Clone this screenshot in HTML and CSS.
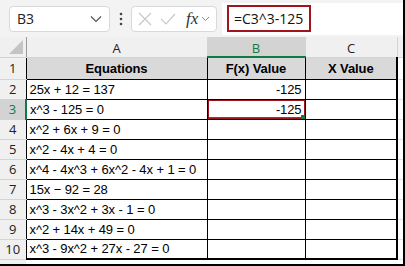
FILE: index.html
```
<!DOCTYPE html>
<html lang="en">
<head>
    <meta charset="UTF-8">
    <title>Equations</title>
    <link rel="stylesheet" href="styles.css">
</head>
<body>
    <div class="sheet">
        <div class="toolbar">
            <div class="name-box">
                <span>B3</span>
                <svg width="12" height="8" viewBox="0 0 12 8"><path d="M1 1.5 L6 6.5 L11 1.5" fill="none" stroke="#555" stroke-width="1.2"/></svg>
            </div>
            <div class="dots">
                <svg width="4" height="14" viewBox="0 0 4 14"><circle cx="2" cy="2" r="1.3" fill="#444"/><circle cx="2" cy="7" r="1.3" fill="#444"/><circle cx="2" cy="12" r="1.3" fill="#444"/></svg>
            </div>
            <div class="fx-group">
                <svg width="14" height="14" viewBox="0 0 14 14"><path d="M1 1 L13 13 M13 1 L1 13" stroke="#c8c8c8" stroke-width="1.2"/></svg>
                <svg width="16" height="14" viewBox="0 0 16 14"><path d="M1 7 L6 12 L15 2" fill="none" stroke="#c8c8c8" stroke-width="1.2"/></svg>
                <span class="fx">fx</span>
                <svg width="9" height="6" viewBox="0 0 9 6"><path d="M1 1 L4.5 4.5 L8 1" fill="none" stroke="#888" stroke-width="1"/></svg>
            </div>
            <div class="formula">
                <span class="formula-text">=C3^3-125</span>
            </div>
        </div>

        <table class="grid">
            <colgroup>
                <col class="col-num">
                <col class="col-a">
                <col class="col-b">
                <col class="col-c">
                <col class="col-rest">
            </colgroup>
            <tr class="head-row">
                <th class="corner"><span class="corner-mark"></span></th>
                <th class="col-head">A</th>
                <th class="col-head active">B</th>
                <th class="col-head">C</th>
                <th class="col-head rest"></th>
            </tr>
            <tr class="title-row">
                <td class="row-num">1</td>
                <td class="cell title">Equations</td>
                <td class="cell title">F(x) Value</td>
                <td class="cell title last">X Value</td>
                <td class="rest"></td>
            </tr>
            <tr>
                <td class="row-num">2</td>
                <td class="cell">25x + 12 = 137</td>
                <td class="cell num">-125</td>
                <td class="cell last"></td>
                <td class="rest"></td>
            </tr>
            <tr>
                <td class="row-num active">3</td>
                <td class="cell">x^3 - 125 = 0</td>
                <td class="cell num selected">-125<span class="fill-handle"></span></td>
                <td class="cell last"></td>
                <td class="rest"></td>
            </tr>
            <tr>
                <td class="row-num">4</td>
                <td class="cell">x^2 + 6x + 9 = 0</td>
                <td class="cell"></td>
                <td class="cell last"></td>
                <td class="rest"></td>
            </tr>
            <tr>
                <td class="row-num">5</td>
                <td class="cell">x^2 - 4x + 4 = 0</td>
                <td class="cell"></td>
                <td class="cell last"></td>
                <td class="rest"></td>
            </tr>
            <tr>
                <td class="row-num">6</td>
                <td class="cell">x^4 - 4x^3 + 6x^2 - 4x + 1 = 0</td>
                <td class="cell"></td>
                <td class="cell last"></td>
                <td class="rest"></td>
            </tr>
            <tr>
                <td class="row-num">7</td>
                <td class="cell">15x − 92 = 28</td>
                <td class="cell"></td>
                <td class="cell last"></td>
                <td class="rest"></td>
            </tr>
            <tr>
                <td class="row-num">8</td>
                <td class="cell">x^3 - 3x^2 + 3x - 1 = 0</td>
                <td class="cell"></td>
                <td class="cell last"></td>
                <td class="rest"></td>
            </tr>
            <tr>
                <td class="row-num">9</td>
                <td class="cell">x^2 + 14x + 49 = 0</td>
                <td class="cell"></td>
                <td class="cell last"></td>
                <td class="rest"></td>
            </tr>
            <tr class="bottom-row">
                <td class="row-num">10</td>
                <td class="cell">x^3 - 9x^2 + 27x - 27 = 0</td>
                <td class="cell"></td>
                <td class="cell last"></td>
                <td class="rest"></td>
            </tr>
            <tr class="spare-row">
                <td class="row-num"></td>
                <td></td>
                <td></td>
                <td></td>
                <td class="rest"></td>
            </tr>
        </table>
    </div>
</body>
</html>
```
FILE: styles.css
```
body {
    margin: 0;
    font-family: "Liberation Sans", Arial, sans-serif;
    background-color: #fff;
}

.sheet {
    width: 403px;
    height: 264px;
    border-right: 2px solid #000;
    border-bottom: 2px solid #000;
    overflow: hidden;
    background-color: #fff;
}

/* formula bar strip */
.toolbar {
    display: flex;
    align-items: center;
    height: 37px;
    padding-left: 9px;
    background-color: #f3f3f3;
    box-sizing: border-box;
}

.name-box {
    width: 101px;
    height: 26px;
    box-sizing: border-box;
    display: flex;
    align-items: center;
    justify-content: space-between;
    padding: 0 7px 0 7px;
    background-color: #fff;
    border: 1px solid #d9d9d9;
    border-radius: 4px;
    font-family: "Open Sans", sans-serif;
    font-size: 14px;
    color: #222;
}

.dots {
    width: 21px;
    display: flex;
    justify-content: center;
}

.fx-group {
    width: 86px;
    height: 26px;
    box-sizing: border-box;
    display: flex;
    align-items: center;
    gap: 8px;
    padding-left: 6px;
    background-color: #fff;
    border: 1px solid #d9d9d9;
    border-radius: 4px;
}

.fx {
    font-family: "Liberation Serif", serif;
    font-style: italic;
    font-size: 17px;
    color: #333;
    margin-left: 2px;
    margin-right: -5px;
}

.formula {
    flex: 1;
    height: 32px;
    margin-left: 5px;
    display: flex;
    align-items: center;
    padding-left: 5px;
    background-color: #fff;
}

.formula-text {
    height: 27px;
    width: 84px;
    box-sizing: border-box;
    display: flex;
    align-items: center;
    padding-left: 5px;
    border: 2px solid #a0141e;
    font-family: "Open Sans", sans-serif;
    font-size: 14px;
    white-space: nowrap;
    color: #111;
}

/* grid */
.grid {
    border-collapse: collapse;
    table-layout: fixed;
    width: 403px;
}

.col-num { width: 26px; }
.col-a { width: 181px; }
.col-b { width: 98px; }
.col-c { width: 92px; }
.col-rest { width: 6px; }

.grid td,
.grid th {
    padding: 0;
    height: 20px;
    box-sizing: border-box;
    white-space: nowrap;
    overflow: hidden;
}

.head-row th {
    height: 20px;
    padding-top: 4px;
    background-color: #f0f0f0;
    font-family: "Open Sans", sans-serif;
    font-weight: normal;
    font-size: 13px;
    line-height: 15px;
    color: #222;
    border-right: 1px solid #d4d4d4;
    border-bottom: 1px solid #d4d4d4;
}

.head-row th.active {
    background-color: #d3d3d3;
    color: #107c41;
    border-bottom: 2px solid #107c41;
}

.corner {
    position: relative;
    border-right: 1px solid #9a9a9a !important;
}

.corner-mark {
    position: absolute;
    right: 3px;
    bottom: 3px;
    width: 0;
    height: 0;
    border-left: 14px solid transparent;
    border-bottom: 14px solid #c4c4c4;
}

.row-num {
    background-color: #f0f0f0;
    text-align: center;
    font-family: "Open Sans", sans-serif;
    font-size: 13px;
    color: #222;
    border-bottom: 1px solid #d4d4d4;
}

.row-num.active {
    background-color: #d3d3d3;
    color: #107c41;
    border-right: 2px solid #107c41;
}

.cell {
    border: 1px solid #000;
    padding: 0 3px !important;
    font-size: 13px;
    letter-spacing: -0.1px;
    color: #000;
}

.title-row td {
    height: 22px;
}

.title-row .title {
    background-color: #d9d9d9;
    font-weight: bold;
    text-align: center;
}

.num {
    text-align: right;
}

.last {
    border-right: 2px solid #000;
}

.bottom-row .cell {
    border-bottom: 2px solid #000;
}

.rest {
    border-bottom: 1px solid #e1e1e1;
}

.spare-row td {
    height: 5px;
}

/* active cell highlight */
.selected {
    position: relative;
    box-shadow: inset 0 -2px 0 #107c41;
}

.selected::after {
    content: "";
    position: absolute;
    left: -1px;
    top: -1px;
    right: -1px;
    bottom: -1px;
    border: 2px solid #a0141e;
}

.fill-handle {
    position: absolute;
    right: -1px;
    bottom: -1px;
    width: 5px;
    height: 5px;
    background-color: #107c41;
    z-index: 1;
}
```
